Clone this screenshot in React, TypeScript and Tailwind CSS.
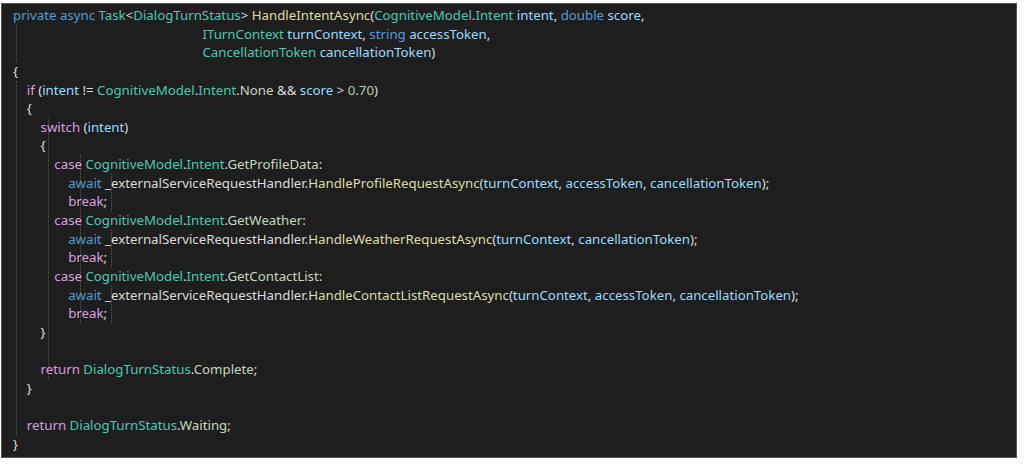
import React from "react";

const K = "text-[#569cd6]"; // blue keyword
const C = "text-[#d8a0df]"; // control
const T = "text-[#4ec9b0]"; // type
const P = "text-[#9cdcfe]"; // param
const M = "text-[#dcdcaa]"; // method
const D = "text-[#dcdcdc]"; // default
const E = "text-[#c8d6c0]"; // enum member
const N = "text-[#b5cea8]"; // number

type Tok = [string, string];
const lines: { ind: number; toks: Tok[] }[] = [
  { ind: 0, toks: [[K, "private async "], [T, "Task"], [D, "<"], [T, "DialogTurnStatus"], [D, "> "], [M, "HandleIntentAsync"], [D, "("], [T, "CognitiveModel"], [D, "."], [T, "Intent"], [D, " "], [P, "intent"], [D, ", "], [K, "double "], [P, "score"], [D, ","]] },
  { ind: 0, toks: [[D, " ".repeat(55)], [T, "ITurnContext"], [D, " "], [P, "turnContext"], [D, ", "], [K, "string "], [P, "accessToken"], [D, ","]] },
  { ind: 0, toks: [[D, " ".repeat(55)], [T, "CancellationToken"], [D, " "], [P, "cancellationToken"], [D, ")"]] },
  { ind: 0, toks: [[D, "{"]] },
  { ind: 1, toks: [[C, "if"], [D, " ("], [P, "intent"], [D, " != "], [T, "CognitiveModel"], [D, "."], [T, "Intent"], [D, "."], [E, "None"], [D, " && "], [P, "score"], [D, " > "], [N, "0.70"], [D, ")"]] },
  { ind: 1, toks: [[D, "{"]] },
  { ind: 2, toks: [[C, "switch"], [D, " ("], [P, "intent"], [D, ")"]] },
  { ind: 2, toks: [[D, "{"]] },
  { ind: 3, toks: [[C, "case "], [T, "CognitiveModel"], [D, "."], [T, "Intent"], [D, "."], [E, "GetProfileData"], [D, ":"]] },
  { ind: 4, toks: [[K, "await "], [D, "_externalServiceRequestHandler."], [M, "HandleProfileRequestAsync"], [D, "("], [P, "turnContext"], [D, ", "], [P, "accessToken"], [D, ", "], [P, "cancellationToken"], [D, ");"]] },
  { ind: 4, toks: [[C, "break"], [D, ";"]] },
  { ind: 3, toks: [[C, "case "], [T, "CognitiveModel"], [D, "."], [T, "Intent"], [D, "."], [E, "GetWeather"], [D, ":"]] },
  { ind: 4, toks: [[K, "await "], [D, "_externalServiceRequestHandler."], [M, "HandleWeatherRequestAsync"], [D, "("], [P, "turnContext"], [D, ", "], [P, "cancellationToken"], [D, ");"]] },
  { ind: 4, toks: [[C, "break"], [D, ";"]] },
  { ind: 3, toks: [[C, "case "], [T, "CognitiveModel"], [D, "."], [T, "Intent"], [D, "."], [E, "GetContactList"], [D, ":"]] },
  { ind: 4, toks: [[K, "await "], [D, "_externalServiceRequestHandler."], [M, "HandleContactListRequestAsync"], [D, "("], [P, "turnContext"], [D, ", "], [P, "accessToken"], [D, ", "], [P, "cancellationToken"], [D, ");"]] },
  { ind: 4, toks: [[C, "break"], [D, ";"]] },
  { ind: 2, toks: [[D, "}"]] },
  { ind: 0, toks: [] },
  { ind: 2, toks: [[C, "return "], [T, "DialogTurnStatus"], [D, "."], [E, "Complete"], [D, ";"]] },
  { ind: 1, toks: [[D, "}"]] },
  { ind: 0, toks: [] },
  { ind: 1, toks: [[C, "return "], [T, "DialogTurnStatus"], [D, "."], [E, "Waiting"], [D, ";"]] },
  { ind: 0, toks: [[D, "}"]] },
];

const guides: [number, number, number][] = [
  [0, 1, 3],
  [0, 4, 23],
  [1, 6, 20],
  [2, 8, 17],
  [3, 9, 11],
  [3, 12, 14],
  [3, 15, 17],
];

const LH = 18.65;
const CW = 7.95;

export default function App() {
  return (
    <div className="w-[1024px] h-[465px] bg-white pt-[3px] pl-[1px]">
      <div className="relative w-[1016px] h-[455px] bg-[#1e1e1e] border border-[#555] pl-[11px] pt-[2px] overflow-hidden">
        {guides.map(([lv, s, e], i) => (
          <div
            key={i}
            className="absolute border-l border-dotted border-[#5a5a5a]"
            style={{ left: 14 + lv * 4 * CW, top: 2 + s * LH, height: (e - s) * LH }}
          />
        ))}
        <div className="relative font-['Liberation_Mono'] text-[13.25px] leading-[18.65px] whitespace-pre">
          {lines.map((l, i) => (
            <div key={i} className="h-[18.65px]">
              <span>{"    ".repeat(l.ind)}</span>
              {l.toks.map(([c, t], j) => (
                <span key={j} className={c}>{t}</span>
              ))}
            </div>
          ))}
        </div>
      </div>
    </div>
  );
}
